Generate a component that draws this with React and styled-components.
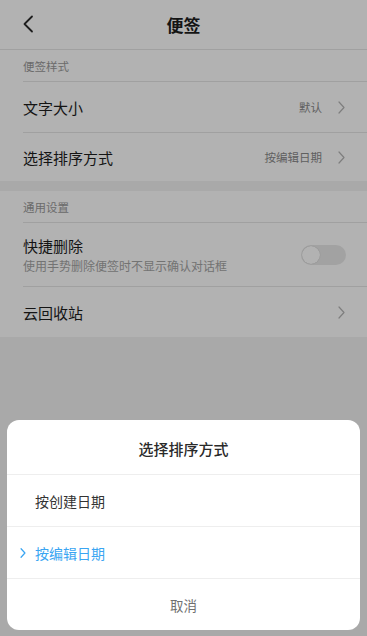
import React from 'react';
import styled, { createGlobalStyle } from 'styled-components';

const GlobalStyle = createGlobalStyle`
  html, body {
    margin: 0;
    padding: 0;
    background: #f3f3f3;
    font-family: "Noto Sans CJK SC", "Noto Sans", sans-serif;
  }
  #root {
    min-height: 636px;
  }
`;

const Page = styled.div`
  width: 367px;
  min-height: 636px;
  background: #f3f3f3;
  position: relative;
  overflow: hidden;
`;

const Header = styled.div`
  height: 49px;
  background: #fff;
  border-bottom: 1px solid #e6e6e6;
  display: flex;
  align-items: center;
  justify-content: center;
  position: relative;
`;

const BackButton = styled.div`
  position: absolute;
  left: 19px;
  top: 13px;
  width: 18px;
  height: 22px;
  display: flex;
  align-items: center;
  justify-content: center;
`;

const HeaderTitle = styled.div`
  font-size: 17px;
  font-weight: 700;
  color: #1e1e1e;
`;

const Group = styled.div`
  background: #fff;
  margin-top: ${p => (p.$gap ? '10px' : '0')};
`;

const SectionLabel = styled.div`
  height: 32px;
  box-sizing: border-box;
  margin-left: 23px;
  border-bottom: 1px solid #e6e6e6;
  display: flex;
  align-items: center;
  font-size: 11.5px;
  color: #9a9a9a;
  padding-top: 1px;
`;

const Row = styled.div`
  height: ${p => p.$h || 50}px;
  box-sizing: border-box;
  margin-left: 23px;
  padding-right: 22px;
  display: flex;
  align-items: center;
  border-bottom: ${p => (p.$last ? 'none' : '1px solid #e6e6e6')};
`;

const RowText = styled.div`
  flex: 1;
  display: flex;
  flex-direction: column;
  gap: 1px;
`;

const RowTitle = styled.div`
  font-size: 15px;
  color: #1e1e1e;
`;

const RowSub = styled.div`
  font-size: 12px;
  color: #a5a5a5;
`;

const RowValue = styled.div`
  font-size: 11.5px;
  color: #8a8a8a;
  margin-right: 16px;
`;

const Toggle = styled.div`
  width: 45px;
  height: 20px;
  border-radius: 10px;
  background: #e9e9e9;
  position: relative;
  margin-right: -1px;

  &::after {
    content: '';
    position: absolute;
    left: 1px;
    top: 1px;
    width: 18px;
    height: 18px;
    border-radius: 50%;
    background: #fff;
    box-shadow: 0 0 1px rgba(0, 0, 0, 0.25);
  }
`;

const Overlay = styled.div`
  position: absolute;
  inset: 0;
  background: rgba(0, 0, 0, 0.3);
  display: flex;
  flex-direction: column;
  justify-content: flex-end;
  padding: 0 7px 6px;
`;

const Sheet = styled.div`
  background: #fff;
  border-radius: 12px;
  overflow: hidden;
`;

const SheetTitle = styled.div`
  height: 55px;
  display: flex;
  align-items: center;
  justify-content: center;
  font-size: 15px;
  font-weight: 500;
  color: #2a2a2a;
  border-bottom: 1px solid #eeeeee;
  box-sizing: border-box;
  padding-top: 2px;
`;

const Option = styled.div`
  height: 52px;
  box-sizing: border-box;
  border-bottom: 1px solid #eeeeee;
  display: flex;
  align-items: center;
  padding-left: 13px;
  font-size: 14px;
  color: ${p => (p.$active ? '#3aa5f2' : '#333')};
`;

const OptionMark = styled.span`
  width: 15px;
  display: flex;
  align-items: center;
`;

const Cancel = styled.div`
  height: 51px;
  display: flex;
  align-items: center;
  justify-content: center;
  font-size: 13.5px;
  color: #707070;
`;

const Chevron = ({ color = '#b5b5b5', w = 7, h = 13, sw = 1.2 }) => (
  <svg width={w} height={h} viewBox="0 0 7 13">
    <polyline points="1,1 6,6.5 1,12" fill="none" stroke={color} strokeWidth={sw} strokeLinecap="round" strokeLinejoin="round" />
  </svg>
);

export default function App() {
  return (
    <>
      <GlobalStyle />
      <Page>
        <Header>
          <BackButton>
            <svg width="12" height="18" viewBox="0 0 12 18">
              <polyline points="10,1.5 2.5,9 10,16.5" fill="none" stroke="#2b2b2b" strokeWidth="1.8" strokeLinecap="round" strokeLinejoin="round" />
            </svg>
          </BackButton>
          <HeaderTitle>便签</HeaderTitle>
        </Header>

        <Group>
          <SectionLabel>便签样式</SectionLabel>
          <Row $h={51}>
            <RowText><RowTitle>文字大小</RowTitle></RowText>
            <RowValue>默认</RowValue>
            <Chevron />
          </Row>
          <Row $h={48} $last>
            <RowText><RowTitle>选择排序方式</RowTitle></RowText>
            <RowValue>按编辑日期</RowValue>
            <Chevron />
          </Row>
        </Group>

        <Group $gap>
          <SectionLabel>通用设置</SectionLabel>
          <Row $h={64}>
            <RowText>
              <RowTitle>快捷删除</RowTitle>
              <RowSub>使用手势删除便签时不显示确认对话框</RowSub>
            </RowText>
            <Toggle />
          </Row>
          <Row $h={50} $last>
            <RowText><RowTitle>云回收站</RowTitle></RowText>
            <Chevron />
          </Row>
        </Group>

        <Overlay>
          <Sheet>
            <SheetTitle>选择排序方式</SheetTitle>
            <Option>
              <OptionMark />
              按创建日期
            </Option>
            <Option $active>
              <OptionMark>
                <Chevron color="#3aa5f2" w={6} h={10} sw={1.6} />
              </OptionMark>
              按编辑日期
            </Option>
            <Cancel>取消</Cancel>
          </Sheet>
        </Overlay>
      </Page>
    </>
  );
}
